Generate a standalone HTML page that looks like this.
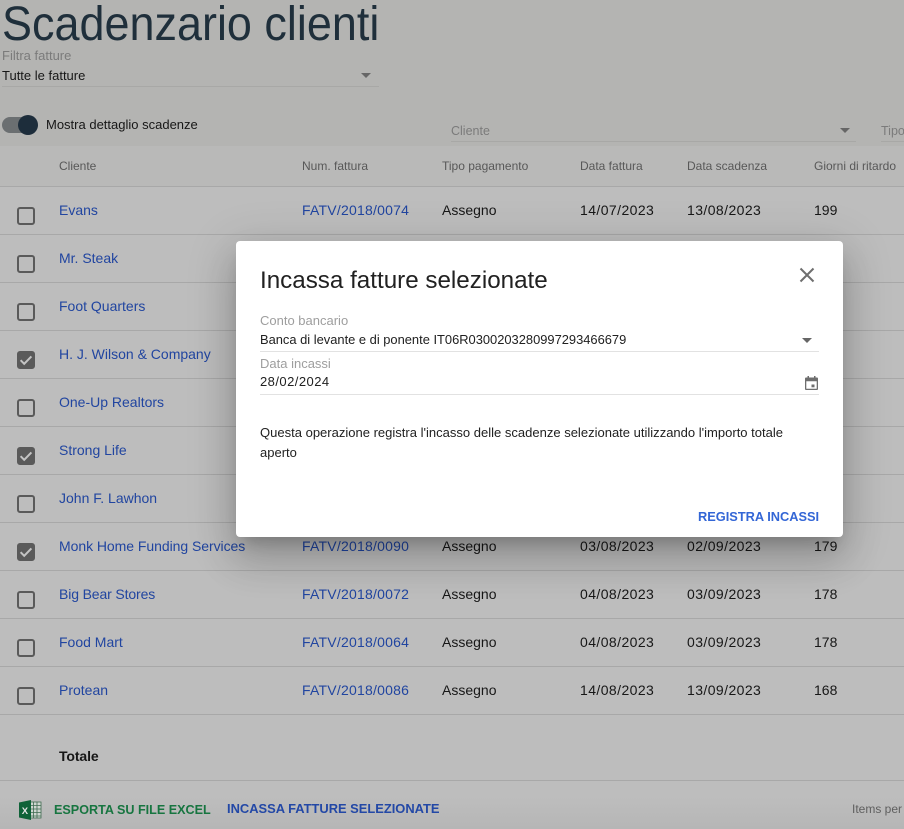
<!DOCTYPE html>
<html lang="it"><head><meta charset="utf-8"><title>Scadenzario clienti</title>
<style>
html,body{margin:0;padding:0}
body{width:904px;height:829px;overflow:hidden;position:relative;background:#b4b4b2;font-family:"Liberation Sans",sans-serif;font-size:14px;color:#171717}
.a{position:absolute;white-space:nowrap}
.t{line-height:20px;height:20px}
.line{position:absolute;left:0;width:904px;height:1px;background:#a8a8a8}
.th{color:#585858;font-size:12px;top:156px}
.lnk{color:#2145a0}
.n{letter-spacing:.22px}
.d{letter-spacing:.42px}
.cb{position:absolute;left:17px;width:14px;height:14px;border:2px solid #5a5a5a;border-radius:3px}
.cb.on{background:#5a5a5a}
.cb svg{position:absolute;left:-2px;top:-2px}
.arrow{position:absolute;width:0;height:0;border-left:5px solid transparent;border-right:5px solid transparent;border-top:5px solid #666}
#dlg{position:absolute;left:236px;top:241px;width:607px;height:296px;background:#fff;border-radius:4px;box-shadow:0 11px 15px -7px rgba(0,0,0,.2),0 24px 38px 3px rgba(0,0,0,.14),0 9px 46px 8px rgba(0,0,0,.12)}
</style></head><body>
<div class="a" style="left:0;top:146px;width:904px;height:40px;background:#b9b9b8"></div>
<div class="a" style="left:0;top:187px;width:904px;height:642px;background:linear-gradient(#bdbdbd 0,#bdbdbd 610px,#b6b6b6 642px)"></div>

<div class="a" style="left:2px;top:-6px;font-size:48.5px;line-height:60px;color:#1f2f3b;transform:scaleX(.927);transform-origin:0 0">Scadenzario clienti</div>
<div class="a t" style="left:2px;top:46px;font-size:13px;color:#7b7b7b">Filtra fatture</div>
<div class="a t" style="left:2px;top:66px;font-size:13px">Tutte le fatture</div>
<div class="arrow" style="left:361px;top:73px"></div>
<div class="a" style="left:2px;top:86px;width:377px;height:1px;background:#a8a8a6"></div>

<div class="a" style="left:2px;top:117px;width:34px;height:16px;border-radius:8px;background:#6b6f71"></div>
<div class="a" style="left:18px;top:115px;width:20px;height:20px;border-radius:50%;background:#1d2d3b"></div>
<div class="a t" style="left:46px;top:115px;font-size:13px">Mostra dettaglio scadenze</div>

<div class="a t" style="left:451px;top:121px;font-size:12.500px;color:#7b7b7b">Cliente</div>
<div class="arrow" style="left:840px;top:128px"></div>
<div class="a" style="left:451px;top:141px;width:405px;height:1px;background:#a8a8a6"></div>
<div class="a t" style="left:881px;top:121px;font-size:12.500px;color:#7b7b7b">Tipo</div>
<div class="a" style="left:881px;top:141px;width:23px;height:1px;background:#a8a8a6"></div>

<div class="a t th" style="left:59px">Cliente</div>
<div class="a t th" style="left:302px">Num. fattura</div>
<div class="a t th" style="left:442px">Tipo pagamento</div>
<div class="a t th" style="left:580px">Data fattura</div>
<div class="a t th" style="left:687px">Data scadenza</div>
<div class="a t th" style="left:814px">Giorni di ritardo</div>

<div class="line" style="top:186px"></div>
<div class="line" style="top:234px"></div>
<div class="line" style="top:282px"></div>
<div class="line" style="top:330px"></div>
<div class="line" style="top:378px"></div>
<div class="line" style="top:426px"></div>
<div class="line" style="top:474px"></div>
<div class="line" style="top:522px"></div>
<div class="line" style="top:570px"></div>
<div class="line" style="top:618px"></div>
<div class="line" style="top:666px"></div>
<div class="line" style="top:714px"></div>

<!-- Row 1 -->
<div class="cb" style="top:207px"></div>
<div class="a t lnk" style="left:59px;top:200px">Evans</div>
<div class="a t lnk n" style="left:302px;top:200px">FATV/2018/0074</div>
<div class="a t" style="left:442px;top:200px">Assegno</div>
<div class="a t d" style="left:580px;top:200px">14/07/2023</div>
<div class="a t d" style="left:687px;top:200px">13/08/2023</div>
<div class="a t" style="left:814px;top:200px">199</div>
<!-- Rows 2-7 -->
<div class="cb" style="top:255px"></div><div class="a t lnk" style="left:59px;top:248px">Mr. Steak</div>
<div class="cb" style="top:303px"></div><div class="a t lnk" style="left:59px;top:296px">Foot Quarters</div>
<div class="cb on" style="top:351px"><svg width="18" height="18" viewBox="0 0 18 18"><path d="M3.6 9.2l3.6 3.6 7.2-7.4" fill="none" stroke="#c4c4c4" stroke-width="2"/></svg></div><div class="a t lnk" style="left:59px;top:344px">H. J. Wilson &amp; Company</div>
<div class="cb" style="top:399px"></div><div class="a t lnk" style="left:59px;top:392px">One-Up Realtors</div>
<div class="cb on" style="top:447px"><svg width="18" height="18" viewBox="0 0 18 18"><path d="M3.6 9.2l3.6 3.6 7.2-7.4" fill="none" stroke="#c4c4c4" stroke-width="2"/></svg></div><div class="a t lnk" style="left:59px;top:440px">Strong Life</div>
<div class="cb" style="top:495px"></div><div class="a t lnk" style="left:59px;top:488px">John F. Lawhon</div>
<!-- Row 8 -->
<div class="cb on" style="top:543px"><svg width="18" height="18" viewBox="0 0 18 18"><path d="M3.6 9.2l3.6 3.6 7.2-7.4" fill="none" stroke="#c4c4c4" stroke-width="2"/></svg></div>
<div class="a t lnk" style="left:59px;top:536px;letter-spacing:-.05px">Monk Home Funding Services</div>
<div class="a t lnk n" style="left:302px;top:536px">FATV/2018/0090</div>
<div class="a t" style="left:442px;top:536px">Assegno</div>
<div class="a t d" style="left:580px;top:536px">03/08/2023</div>
<div class="a t d" style="left:687px;top:536px">02/09/2023</div>
<div class="a t" style="left:814px;top:536px">179</div>
<!-- Row 9 -->
<div class="cb" style="top:591px"></div>
<div class="a t lnk" style="left:59px;top:584px;letter-spacing:-.13px">Big Bear Stores</div>
<div class="a t lnk n" style="left:302px;top:584px">FATV/2018/0072</div>
<div class="a t" style="left:442px;top:584px">Assegno</div>
<div class="a t d" style="left:580px;top:584px">04/08/2023</div>
<div class="a t d" style="left:687px;top:584px">03/09/2023</div>
<div class="a t" style="left:814px;top:584px">178</div>
<!-- Row 10 -->
<div class="cb" style="top:639px"></div>
<div class="a t lnk" style="left:59px;top:632px">Food Mart</div>
<div class="a t lnk n" style="left:302px;top:632px">FATV/2018/0064</div>
<div class="a t" style="left:442px;top:632px">Assegno</div>
<div class="a t d" style="left:580px;top:632px">04/08/2023</div>
<div class="a t d" style="left:687px;top:632px">03/09/2023</div>
<div class="a t" style="left:814px;top:632px">178</div>
<!-- Row 11 -->
<div class="cb" style="top:687px"></div>
<div class="a t lnk" style="left:59px;top:680px">Protean</div>
<div class="a t lnk n" style="left:302px;top:680px">FATV/2018/0086</div>
<div class="a t" style="left:442px;top:680px">Assegno</div>
<div class="a t d" style="left:580px;top:680px">14/08/2023</div>
<div class="a t d" style="left:687px;top:680px">13/09/2023</div>
<div class="a t" style="left:814px;top:680px">168</div>

<div class="a t" style="left:59px;top:746px;font-weight:bold;letter-spacing:-.1px">Totale</div>
<div class="line" style="top:780px"></div>

<svg class="a" style="left:19px;top:799px" width="23" height="22" viewBox="0 0 23 22">
<rect x="11" y="3" width="11" height="16" fill="#cfd6d0" stroke="#3f6b50" stroke-width=".8"/>
<path d="M14.500 3v16M18 3v16M11 6.500h11M11 10h11M11 13.500h11M11 17h11" stroke="#3f6b50" stroke-width=".8"/>
<path d="M0 3.500L12 1v20L0 18.500z" fill="#0f6238"/>
<text x="2.800" y="15" font-family="Liberation Sans, sans-serif" font-size="9.500" font-weight="bold" fill="#e4e4e4">X</text>
</svg>
<div class="a t" style="left:54px;top:800px;font-weight:bold;color:#177540;font-size:12.600px">ESPORTA SU FILE EXCEL</div>
<div class="a t" style="left:227px;top:799px;font-weight:bold;color:#2348a6;font-size:12.900px">INCASSA FATTURE SELEZIONATE</div>
<div class="a t" style="left:852px;top:799px;font-size:12px;color:#5f5f5f">Items per</div>

<div id="dlg">
<div class="a" style="left:24px;top:24px;font-size:24.200px;line-height:32px;color:#212121">Incassa fatture selezionate</div>
<svg class="a" style="left:560px;top:23px" width="22" height="22" viewBox="0 0 22 22"><path d="M4.500 4.500l13 13M17.500 4.500l-13 13" stroke="#6e6e6e" stroke-width="2" fill="none"/></svg>
<div class="a t" style="left:24px;top:70px;font-size:13px;color:#9e9e9e">Conto bancario</div>
<div class="a t" style="left:24px;top:89px;font-size:12.900px;color:#212121">Banca di levante e di ponente IT06R0300203280997293466679</div>
<div class="arrow" style="left:566px;top:97px"></div>
<div class="a" style="left:24px;top:110px;width:559px;height:1px;background:#e2e2e2"></div>
<div class="a t" style="left:24px;top:113px;font-size:13px;color:#9e9e9e">Data incassi</div>
<div class="a t" style="left:24px;top:131px;font-size:13px;letter-spacing:.45px;color:#212121">28/02/2024</div>
<svg class="a" style="left:569px;top:135px" width="13" height="14" viewBox="0 0 13 14"><path fill-rule="evenodd" d="M1 1.500h1.500V0H4v1.500h5V0h1.500v1.500H12a1 1 0 0 1 1 1V13a1 1 0 0 1-1 1H1a1 1 0 0 1-1-1V2.500a1 1 0 0 1 1-1zM1.300 5.200V12.700h10.400V5.200z" fill="#6e6e6e"/><rect x="6.500" y="8.500" width="3" height="2.800" fill="#6e6e6e"/></svg>
<div class="a" style="left:24px;top:153px;width:559px;height:1px;background:#e2e2e2"></div>
<div class="a t" style="left:24px;top:182px;font-size:13.020px;color:#212121">Questa operazione registra l'incasso delle scadenze selezionate utilizzando l'importo totale</div>
<div class="a t" style="left:24px;top:202px;font-size:13px;color:#212121">aperto</div>
<div class="a t" style="left:462px;top:266px;font-weight:bold;font-size:12.800px;color:#3366d6">REGISTRA INCASSI</div>
</div>
</body></html>
